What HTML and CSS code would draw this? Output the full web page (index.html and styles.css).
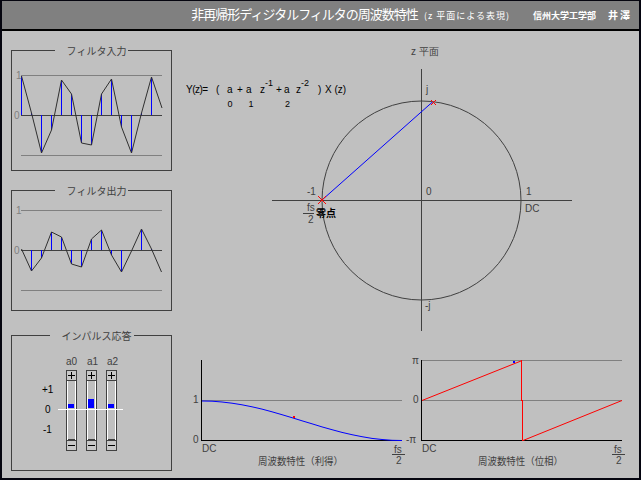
FILE: index.html
```html
<!DOCTYPE html>
<html lang="ja">
<head>
<meta charset="utf-8">
<title>非再帰形ディジタルフィルタの周波数特性</title>
<link rel="stylesheet" href="styles.css">
</head>
<body>
<div class="window">
  <header class="titlebar">
    <span class="t-main">非再帰形ディジタルフィルタの周波数特性</span>
    <span class="t-sub">(z 平面による表現)</span>
    <span class="t-org">信州大学工学部</span>
    <span class="t-author">井澤</span>
  </header>
  <div class="content">
    <aside class="side">
      <section class="panel panel-wave">
        <div class="panel-title">フィルタ入力</div>
        <svg class="panel-svg" width="159" height="119" viewBox="12 51 159 119">
          <g class="crisp">
            <line class="ref" x1="21" y1="75.5" x2="162" y2="75.5"/>
            <line class="zero" x1="21" y1="115.5" x2="162" y2="115.5"/>
            <line class="ref" x1="21" y1="155.5" x2="162" y2="155.5"/>
          </g>
          <text class="lab" x="16" y="79">1</text>
          <text class="lab" x="14" y="119">0</text>
          <g class="stems crisp">
            <line x1="21.5" y1="115" x2="21.5" y2="76"/>
            <line x1="31.5" y1="115" x2="31.5" y2="113"/>
            <line x1="41.5" y1="115" x2="41.5" y2="153"/>
            <line x1="51.5" y1="115" x2="51.5" y2="130"/>
            <line x1="61.5" y1="115" x2="61.5" y2="80"/>
            <line x1="71.5" y1="115" x2="71.5" y2="94"/>
            <line x1="81.5" y1="115" x2="81.5" y2="143"/>
            <line x1="91.5" y1="115" x2="91.5" y2="145"/>
            <line x1="101.5" y1="115" x2="101.5" y2="94"/>
            <line x1="111.5" y1="115" x2="111.5" y2="79"/>
            <line x1="121.5" y1="115" x2="121.5" y2="127"/>
            <line x1="131.5" y1="115" x2="131.5" y2="153"/>
            <line x1="141.5" y1="115" x2="141.5" y2="113"/>
            <line x1="151.5" y1="115" x2="151.5" y2="77"/>
          </g>
          <polyline class="wave" points="21.5,76 31.5,113 41.5,153 51.5,130 61.5,80 71.5,94 81.5,143 91.5,145 101.5,94 111.5,79 121.5,127 131.5,153 141.5,113 151.5,77 162,108"/>
        </svg>
      </section>

      <section class="panel panel-wave panel-out">
        <div class="panel-title">フィルタ出力</div>
        <svg class="panel-svg" width="159" height="119" viewBox="12 191 159 119">
          <g class="crisp">
            <line class="ref" x1="21" y1="210.5" x2="162" y2="210.5"/>
            <line class="zero" x1="21" y1="250.5" x2="162" y2="250.5"/>
            <line class="ref" x1="21" y1="290.5" x2="162" y2="290.5"/>
          </g>
          <text class="lab" x="16" y="214">1</text>
          <text class="lab" x="14" y="254">0</text>
          <g class="stems crisp">
            <line x1="31.5" y1="250" x2="31.5" y2="271"/>
            <line x1="41.5" y1="250" x2="41.5" y2="258"/>
            <line x1="51.5" y1="250" x2="51.5" y2="232"/>
            <line x1="61.5" y1="250" x2="61.5" y2="237"/>
            <line x1="71.5" y1="250" x2="71.5" y2="264"/>
            <line x1="81.5" y1="250" x2="81.5" y2="267"/>
            <line x1="91.5" y1="250" x2="91.5" y2="239"/>
            <line x1="101.5" y1="250" x2="101.5" y2="230"/>
            <line x1="111.5" y1="250" x2="111.5" y2="255"/>
            <line x1="121.5" y1="250" x2="121.5" y2="272"/>
            <line x1="141.5" y1="250" x2="141.5" y2="229"/>
            <line x1="151.5" y1="250" x2="151.5" y2="249"/>
          </g>
          <polyline class="wave" points="21.5,249 31.5,271 41.5,258 51.5,232 61.5,237 71.5,264 81.5,267 91.5,239 101.5,230 111.5,255 121.5,272 131.5,251 141.5,229 151.5,249 161.5,272"/>
        </svg>
      </section>

      <section class="panel panel-impulse">
        <div class="panel-title">インパルス応答</div>
        <svg class="panel-svg" width="159" height="134" viewBox="12 336 159 134">
          <text class="coef" x="66" y="365">a0</text>
          <text class="coef" x="87" y="365">a1</text>
          <text class="coef" x="107" y="365">a2</text>
          <text class="scale" x="42" y="393">+1</text>
          <text class="scale" x="45" y="413">0</text>
          <text class="scale" x="43" y="433">-1</text>
          <g class="slider crisp" transform="translate(66 0)">
            <rect class="track" x="0.5" y="380.5" width="10" height="59"/>
            <line class="track-hl" x1="1.5" y1="381" x2="1.5" y2="440"/>
            <line class="track-hl" x1="9.5" y1="381" x2="9.5" y2="440"/>
            <rect class="btn" x="0.5" y="370.5" width="10" height="10"/>
            <path class="sign" d="M2 375.5H9M5.5 372V379"/>
            <rect class="btn" x="0.5" y="440.5" width="10" height="10"/>
            <path class="sign" d="M2 445.5H9"/>
            <rect class="bar" x="2" y="404" width="6" height="4"/>
          </g>
          <g class="slider crisp" transform="translate(86 0)">
            <rect class="track" x="0.5" y="380.5" width="10" height="59"/>
            <line class="track-hl" x1="1.5" y1="381" x2="1.5" y2="440"/>
            <line class="track-hl" x1="9.5" y1="381" x2="9.5" y2="440"/>
            <rect class="btn" x="0.5" y="370.5" width="10" height="10"/>
            <path class="sign" d="M2 375.5H9M5.5 372V379"/>
            <rect class="btn" x="0.5" y="440.5" width="10" height="10"/>
            <path class="sign" d="M2 445.5H9"/>
            <rect class="bar" x="2" y="399" width="6" height="9"/>
          </g>
          <g class="slider crisp" transform="translate(106 0)">
            <rect class="track" x="0.5" y="380.5" width="10" height="59"/>
            <line class="track-hl" x1="1.5" y1="381" x2="1.5" y2="440"/>
            <line class="track-hl" x1="9.5" y1="381" x2="9.5" y2="440"/>
            <rect class="btn" x="0.5" y="370.5" width="10" height="10"/>
            <path class="sign" d="M2 375.5H9M5.5 372V379"/>
            <rect class="btn" x="0.5" y="440.5" width="10" height="10"/>
            <path class="sign" d="M2 445.5H9"/>
            <rect class="bar" x="2" y="404" width="6" height="4"/>
          </g>
          <line class="zero-white crisp" x1="58" y1="409.5" x2="123" y2="409.5"/>
        </svg>
      </section>
    </aside>

    <main class="main">
      <svg class="zplane" width="459" height="314" viewBox="180 31 459 314">
        <text class="axlab" x="411" y="55">z 平面</text>
        <g class="formula">
          <text class="tight" x="186" y="93">Y(z)=</text>
          <text x="216" y="93">(</text>
          <text x="227" y="93">a<tspan class="small" dx="-5" dy="14">0</tspan></text>
          <text x="237" y="93">+</text>
          <text x="246" y="93">a<tspan class="small" dx="-3" dy="14">1</tspan></text>
          <text x="260" y="93">z<tspan class="small" dx="0" dy="-7">-1</tspan></text>
          <text x="276" y="93">+</text>
          <text x="284" y="93">a<tspan class="small" dx="-4.5" dy="14">2</tspan></text>
          <text x="296" y="93">z<tspan class="small" dx="0" dy="-7">-2</tspan></text>
          <text x="318" y="93">)</text>
          <text x="325" y="93">X (z)</text>
        </g>
        <g class="crisp">
          <line class="axis" x1="272" y1="200.5" x2="572" y2="200.5"/>
          <line class="axis" x1="421.5" y1="69" x2="421.5" y2="331"/>
        </g>
        <circle class="unit" cx="421.5" cy="200.5" r="99.5"/>
        <line class="vec" x1="322" y1="200" x2="433" y2="101.5"/>
        <path class="zero-mark" d="M318 196L326 204M318 204L326 196"/>
        <path class="zero-mark" d="M431 100L436 105M431 105L436 100"/>
        <text class="axlab" x="307" y="195">-1</text>
        <text class="axlab" x="426" y="195">0</text>
        <text class="axlab" x="526" y="195">1</text>
        <text class="axlab" x="525" y="212">DC</text>
        <text class="axlab" x="307" y="211">fs</text>
        <line class="frac crisp" x1="303" y1="213.5" x2="314" y2="213.5"/>
        <text class="axlab" x="308" y="223">2</text>
        <text class="zero-text" x="316" y="217">零点</text>
        <text class="axlab" x="426" y="93">j</text>
        <text class="axlab" x="425" y="309">-j</text>
      </svg>

      <div class="plots">
        <svg class="plot" width="230" height="132" viewBox="180 345 230 132">
          <g class="crisp">
            <line class="grid" x1="202" y1="400.5" x2="402" y2="400.5"/>
            <line class="frame" x1="201.5" y1="360" x2="201.5" y2="441"/>
            <line class="frame" x1="201" y1="440.5" x2="402" y2="440.5"/>
          </g>
          <polyline class="gain" points="202,401 212,401.2 222,402 232,403.2 242,404.8 252,406.8 262,409.1 272,411.8 282,414.7 292,417.7 302,420.8 312,423.8 322,426.9 332,429.7 342,432.4 352,434.7 362,436.7 372,438.4 382,439.5 392,440.3 402,440.5"/>
          <rect class="mark-red" x="293" y="416" width="2" height="2"/>
          <text class="axlab" x="193" y="403">1</text>
          <text class="axlab" x="193" y="443">0</text>
          <text class="axlab" x="202" y="452">DC</text>
          <text class="cap" x="258" y="465" textLength="85" lengthAdjust="spacingAndGlyphs">周波数特性（利得）</text>
          <text class="axlab" x="394" y="453">fs</text>
          <line class="frac crisp" x1="392" y1="454.5" x2="405" y2="454.5"/>
          <text class="axlab" x="396" y="464">2</text>
        </svg>
        <svg class="plot" width="229" height="132" viewBox="410 345 229 132">
          <g class="crisp">
            <line class="grid" x1="422" y1="360.5" x2="622" y2="360.5"/>
            <line class="grid" x1="422" y1="400.5" x2="622" y2="400.5"/>
            <line class="frame" x1="421.5" y1="360" x2="421.5" y2="441"/>
            <line class="frame" x1="421" y1="440.5" x2="622" y2="440.5"/>
          </g>
          <line class="phase" x1="422" y1="400.5" x2="521" y2="361"/>
          <line class="phase crisp" x1="521.5" y1="360" x2="521.5" y2="401"/>
          <line class="phase crisp" x1="522.5" y1="400" x2="522.5" y2="441"/>
          <line class="phase" x1="523" y1="440.5" x2="622" y2="400.5"/>
          <rect class="mark-blue" x="513" y="361" width="2" height="2"/>
          <text class="axlab" x="412" y="364">π</text>
          <text class="axlab" x="413" y="403">0</text>
          <text class="axlab" x="406" y="443">-π</text>
          <text class="axlab" x="422" y="452">DC</text>
          <text class="cap" x="478" y="465" textLength="85" lengthAdjust="spacingAndGlyphs">周波数特性（位相）</text>
          <text class="axlab" x="614" y="453">fs</text>
          <line class="frac crisp" x1="612" y1="454.5" x2="625" y2="454.5"/>
          <text class="axlab" x="616" y="464">2</text>
        </svg>
      </div>
    </main>
  </div>
</div>
</body>
</html>
```

FILE: styles.css
```css
* { box-sizing: border-box; }

html, body {
  margin: 0;
  padding: 0;
  background: #c0c0c0;
}

body {
  width: 641px;
  height: 480px;
  overflow: hidden;
  font-family: "Liberation Sans", "Noto Sans CJK JP", sans-serif;
}

.window {
  width: 641px;
  height: 480px;
  background: #c0c0c0;
  border: 2px solid #05050f;
  border-top: 1px solid #05050f;
  display: flex;
  flex-direction: column;
}

/* ---------- title bar ---------- */
.titlebar {
  flex: none;
  height: 30px;
  background: #808080;
  border-bottom: 2px solid #000;
  display: flex;
  align-items: baseline;
  justify-content: flex-end;
  padding: 6px 7px 0 0;
  color: #fff;
  font-family: "Noto Sans CJK JP", sans-serif;
  line-height: 1;
}

.t-main {
  font-size: 13px;
  letter-spacing: -1px;
}

.t-sub {
  font-size: 9px;
  letter-spacing: 1px;
  margin-left: 6px;
}

.t-org {
  font-size: 9px;
  font-weight: bold;
  margin-left: 23px;
}

.t-author {
  font-size: 10px;
  font-weight: bold;
  letter-spacing: 2px;
  margin-left: 12px;
}

/* ---------- layout ---------- */
.content {
  flex: 1;
  display: flex;
}

.side {
  width: 178px;
  flex: none;
  padding: 19px 0 0 9px;
  display: flex;
  flex-direction: column;
}

.main {
  flex: 1;
  display: flex;
  flex-direction: column;
}

.plots {
  display: flex;
}

svg { display: block; overflow: visible; }

/* ---------- group boxes ---------- */
.panel {
  width: 161px;
  border: 1px solid #404040;
}

.panel-wave { height: 121px; }
.panel-out { margin-top: 19px; }
.panel-impulse { height: 136px; margin-top: 24px; }

.panel-title {
  width: fit-content;
  height: 14px;
  margin: -7px auto -7px;
  padding: 0 2px 0 12px;
  background: #c0c0c0;
  color: #404040;
  font-family: "Noto Sans CJK JP", sans-serif;
  font-size: 10px;
  line-height: 14px;
  position: relative;
  z-index: 1;
}

/* ---------- svg drawing ---------- */
.crisp { shape-rendering: crispEdges; }

.ref { stroke: #808080; stroke-width: 1; }
.zero { stroke: #404040; stroke-width: 1; }
.stems line { stroke: #0000ff; stroke-width: 1; }
.wave { fill: none; stroke: #303030; stroke-width: 1; }

.lab {
  font-family: "Liberation Sans", sans-serif;
  font-size: 10px;
  fill: #808080;
}

.coef {
  font-family: "Liberation Sans", sans-serif;
  font-size: 10px;
  fill: #404040;
}

.scale {
  font-family: "Liberation Sans", sans-serif;
  font-size: 10px;
  fill: #000;
}

.track { fill: #c0c0c0; stroke: #404040; }
.track-hl { stroke: #ffffff; }
.btn { fill: #c8c8c8; stroke: #404040; }
.sign { stroke: #000; fill: none; }
.bar { fill: #0000ff; }
.zero-white { stroke: #ffffff; }

.formula text {
  font-family: "Liberation Sans", sans-serif;
  font-size: 10px;
  fill: #000;
}
.formula .small { font-size: 9px; }
.formula .tight { letter-spacing: -0.5px; }

.axis { stroke: #404040; }
.unit { fill: none; stroke: #404040; stroke-width: 1; }
.vec { stroke: #0000ff; stroke-width: 1; }
.zero-mark { stroke: #ff0000; stroke-width: 1; fill: none; }
.frac { stroke: #404040; }

.axlab {
  font-family: "Liberation Sans", sans-serif;
  font-size: 10px;
  fill: #404040;
}

.zero-text {
  font-family: "Noto Sans CJK JP", sans-serif;
  font-size: 10px;
  font-weight: bold;
  fill: #000;
}

.cap {
  font-family: "Noto Sans CJK JP", sans-serif;
  font-size: 10px;
  fill: #404040;
}

.grid { stroke: #808080; }
.frame { stroke: #000; }
.gain { fill: none; stroke: #0000ff; stroke-width: 1; }
.phase { stroke: #ff0000; stroke-width: 1; }
.mark-red { fill: #ff0000; }
.mark-blue { fill: #0000ff; }
```
